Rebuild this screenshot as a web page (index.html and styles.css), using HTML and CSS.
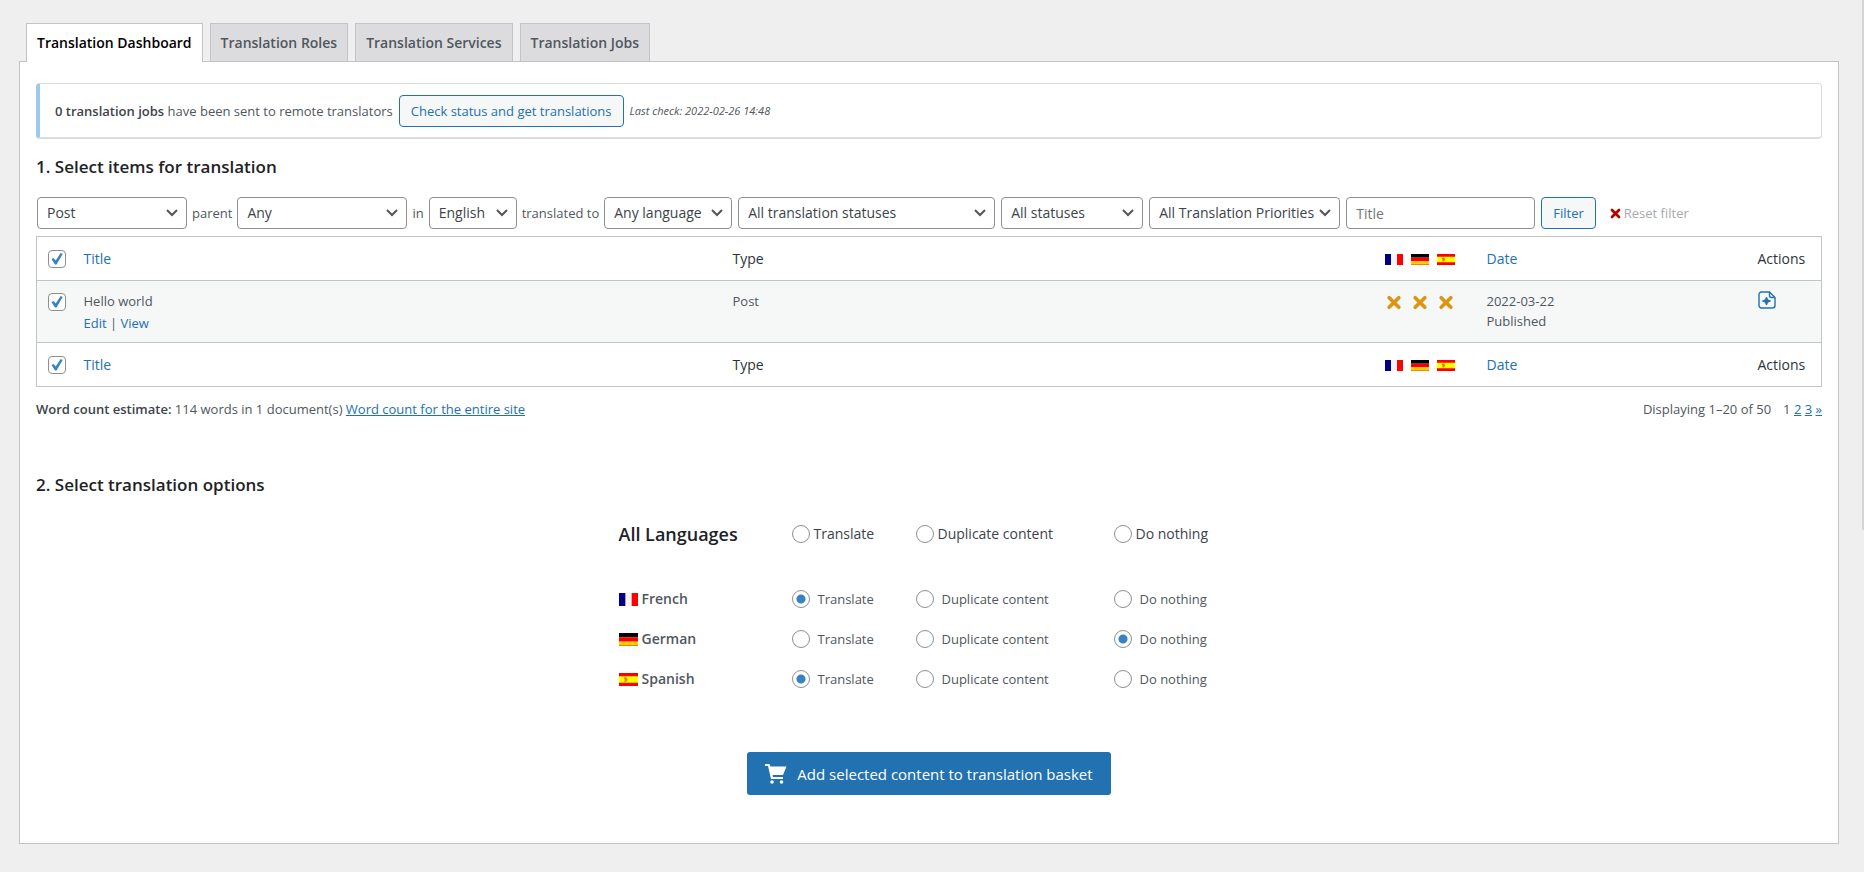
FILE: index.html
```html
<!DOCTYPE html>
<html lang="en">
<head>
  <meta charset="UTF-8">
  <title>Translation Management</title>
  <link rel="stylesheet" href="styles.css">
</head>
<body>

  <!-- shared icons -->
  <svg class="sprite" aria-hidden="true">
    <symbol id="flag-fr" viewBox="0 0 18 12" preserveAspectRatio="none">
      <rect width="18" height="12" fill="#f4f4f4"/>
      <rect width="6" height="12" fill="#000080"/>
      <rect x="12" width="6" height="12" fill="#f00"/>
    </symbol>
    <symbol id="flag-de" viewBox="0 0 18 12" preserveAspectRatio="none">
      <rect width="18" height="4" fill="#000"/>
      <rect y="4" width="18" height="4" fill="#f00"/>
      <rect y="8" width="18" height="4" fill="#fc0"/>
      <path d="M0 11.5h18" stroke="#e08a00"/>
    </symbol>
    <symbol id="flag-es" viewBox="0 0 18 12" preserveAspectRatio="none">
      <rect width="18" height="12" fill="#f00"/>
      <rect y="3" width="18" height="6" fill="#ff0"/>
      <path d="M5 4h2v1h1v2H7v1H5V7h1V6H5z" fill="#e07000"/>
    </symbol>
    <symbol id="icon-cross" viewBox="0 0 14 14">
      <path d="M2.5 2.5l9 9M11.5 2.5l-9 9" stroke="currentColor" stroke-width="3.4" stroke-linecap="round"/>
    </symbol>
  </svg>

  <nav class="tabs">
    <a href="#" class="tab active">Translation Dashboard</a>
    <a href="#" class="tab">Translation Roles</a>
    <a href="#" class="tab">Translation Services</a>
    <a href="#" class="tab">Translation Jobs</a>
  </nav>

  <main class="panel">
    <div class="notice">
      <span><strong>0 translation jobs</strong> have been sent to remote translators</span>
      <button type="button" class="btn">Check status and get translations</button>
      <em class="last-check">Last check: 2022-02-26 14:48</em>
    </div>

    <h2>1. Select items for translation</h2>

    <form class="filters">
      <select class="w-post" aria-label="Type"><option>Post</option></select>
      <label for="parent">parent</label>
      <select id="parent" class="w-parent"><option>Any</option></select>
      <label for="source">in</label>
      <select id="source" class="w-source"><option>English</option></select>
      <label for="target">translated to</label>
      <select id="target" class="w-target"><option>Any language</option></select>
      <select class="w-tstatus" aria-label="Translation status"><option>All translation statuses</option></select>
      <select class="w-status" aria-label="Status"><option>All statuses</option></select>
      <select class="w-priority" aria-label="Priority"><option>All Translation Priorities</option></select>
      <input type="text" class="w-title" placeholder="Title" aria-label="Title">
      <button type="button" class="btn">Filter</button>
      <a href="#" class="reset"><svg class="reset-icon"><use href="#icon-cross"/></svg>Reset filter</a>
    </form>

    <table class="items">
      <thead>
        <tr>
          <th class="col-check"><input type="checkbox" checked aria-label="Select all"></th>
          <th class="col-title"><a href="#">Title</a></th>
          <th class="col-type">Type</th>
          <th class="col-langs">
            <span class="icons">
              <svg class="flag" role="img" aria-label="French"><use href="#flag-fr"/></svg>
              <svg class="flag" role="img" aria-label="German"><use href="#flag-de"/></svg>
              <svg class="flag" role="img" aria-label="Spanish"><use href="#flag-es"/></svg>
            </span>
          </th>
          <th class="col-date"><a href="#">Date</a></th>
          <th class="col-actions">Actions</th>
        </tr>
      </thead>
      <tbody>
        <tr>
          <td class="col-check"><input type="checkbox" checked aria-label="Select Hello world"></td>
          <td>
            Hello world
            <div class="row-actions"><a href="#">Edit</a> | <a href="#">View</a></div>
          </td>
          <td>Post</td>
          <td>
            <span class="icons">
              <svg class="cross"><use href="#icon-cross"/></svg>
              <svg class="cross"><use href="#icon-cross"/></svg>
              <svg class="cross"><use href="#icon-cross"/></svg>
            </span>
          </td>
          <td>2022-03-22<br>Published</td>
          <td>
            <a href="#" class="add-note" aria-label="Add note">
              <svg viewBox="0 0 18 18" fill="none" stroke="currentColor" stroke-width="1.4">
                <path d="M11.5 1H3.500A2.500 2.500 0 0 0 1 3.500V14.500A2.500 2.500 0 0 0 3.500 17H14.500A2.500 2.500 0 0 0 17 14.500V6.500Z"/>
                <path d="M11.500 1V4.500A2 2 0 0 0 13.500 6.500H17"/>
                <path d="M8.500 6l1.200 2.800L12.500 10l-2.800 1.200L8.500 14l-1.200-2.800L4.500 10l2.800-1.200z" fill="currentColor" stroke-width="1"/>
              </svg>
            </a>
          </td>
        </tr>
      </tbody>
      <tfoot>
        <tr>
          <th class="col-check"><input type="checkbox" checked aria-label="Select all"></th>
          <th><a href="#">Title</a></th>
          <th>Type</th>
          <th>
            <span class="icons">
              <svg class="flag" role="img" aria-label="French"><use href="#flag-fr"/></svg>
              <svg class="flag" role="img" aria-label="German"><use href="#flag-de"/></svg>
              <svg class="flag" role="img" aria-label="Spanish"><use href="#flag-es"/></svg>
            </span>
          </th>
          <th><a href="#">Date</a></th>
          <th>Actions</th>
        </tr>
      </tfoot>
    </table>

    <div class="table-foot">
      <p><strong>Word count estimate:</strong> 114 words in 1 document(s) <a href="#">Word count for the entire site</a></p>
      <p class="paging"><span>Displaying 1–20 of 50</span> <span>1 <a href="#">2</a> <a href="#">3</a> <a href="#">»</a></span></p>
    </div>

    <h2>2. Select translation options</h2>

    <form class="options">
      <div class="lang-row all">
        <span class="lang">All Languages</span>
        <label><input type="radio" name="all">Translate</label>
        <label><input type="radio" name="all">Duplicate content</label>
        <label><input type="radio" name="all">Do nothing</label>
      </div>
      <div class="lang-row">
        <span class="lang"><svg class="flag"><use href="#flag-fr"/></svg>French</span>
        <label><input type="radio" name="fr" checked>Translate</label>
        <label><input type="radio" name="fr">Duplicate content</label>
        <label><input type="radio" name="fr">Do nothing</label>
      </div>
      <div class="lang-row">
        <span class="lang"><svg class="flag"><use href="#flag-de"/></svg>German</span>
        <label><input type="radio" name="de">Translate</label>
        <label><input type="radio" name="de">Duplicate content</label>
        <label><input type="radio" name="de" checked>Do nothing</label>
      </div>
      <div class="lang-row">
        <span class="lang"><svg class="flag"><use href="#flag-es"/></svg>Spanish</span>
        <label><input type="radio" name="es" checked>Translate</label>
        <label><input type="radio" name="es">Duplicate content</label>
        <label><input type="radio" name="es">Do nothing</label>
      </div>

      <button type="button" class="btn-primary">
        <svg viewBox="0 0 22 20" fill="#fff">
          <path d="M0 0h4.500l1 2.500H21.500L18 11H7.500L8 13H18v2H6L3 2H0z"/>
          <circle cx="7" cy="18" r="1.800"/>
          <circle cx="16.500" cy="18" r="1.800"/>
        </svg>
        Add selected content to translation basket
      </button>
    </form>
  </main>

</body>
</html>
```
FILE: styles.css
```css
* {
  box-sizing: border-box;
}

body {
  margin: 0;
  min-height: 100vh;
  padding: 23px 25px 29px 19px;
  background: #efefef linear-gradient(#d5d5d5, #d5d5d5) no-repeat right top / 2px 530px;
  font-family: 'Open Sans', 'Noto Sans', sans-serif;
  font-size: 13px;
  line-height: 20px;
  color: #50575e;
}

a {
  color: #2271b1;
  text-decoration: none;
}

strong {
  font-weight: 600;
  color: #3c434a;
}

.sprite {
  position: absolute;
  width: 0;
  height: 0;
}

/* tabs */
.tabs {
  display: flex;
  gap: 7px;
  padding-left: 7px;
}

.tab {
  padding: 9px 10px 8px;
  background: #dcdcde;
  border: 1px solid #c3c4c7;
  border-bottom: none;
  font-size: 14px;
  font-weight: 600;
  color: #50575e;
}

.tab.active {
  margin-bottom: -1px;
  padding-bottom: 9px;
  background: #fff;
  color: #000;
  z-index: 1;
}

.panel {
  padding: 21px 16px 48px;
  background: #fff;
  border: 1px solid #c3c4c7;
}

.notice {
  display: flex;
  align-items: center;
  gap: 6px;
  padding: 11px 15px 10px;
  border: 1px solid #dcdcde;
  border-left: 4px solid #9ec9ee;
  border-bottom-width: 2px;
  border-radius: 4px;
}

.last-check {
  font-size: 11px;
}

h2 {
  margin: 16px 0 18px;
  font-size: 17px;
  font-weight: 600;
  line-height: 24px;
  color: #1d2327;
}

.btn,
select,
input[type="text"] {
  height: 32px;
  border: 1px solid #8c8f94;
  border-radius: 4px;
  background-color: #fff;
  font: inherit;
  font-size: 14px;
  color: #3c434a;
}

.btn {
  padding: 0 11px;
  border-color: #2271b1;
  background: #f6f7f7;
  font-size: 13px;
  color: #2271b1;
}

/* filter bar */
.filters {
  display: flex;
  align-items: center;
  gap: 6px;
  padding-left: 1px;
}

.filters label {
  margin: 0 -1px;
}

select {
  appearance: none;
  padding: 0 24px 0 9px;
  background: #fff url('data:image/svg+xml;utf8,<svg xmlns="http://www.w3.org/2000/svg" width="14" height="10" viewBox="0 0 14 10"><path d="M2 2l5 5 5-5" fill="none" stroke="%23555" stroke-width="2"/></svg>') no-repeat right 7px center;
}

.w-post { width: 150px; }
.w-parent { width: 170px; }
.w-source { width: 88px; }
.w-target { width: 128px; }
.w-tstatus { width: 257px; }
.w-status { width: 142px; }
.w-priority { width: 191px; }
.w-title { width: 189px; }

input[type="text"] {
  padding: 0 9px;
}

::placeholder {
  color: #757575;
}

.reset {
  display: flex;
  align-items: center;
  gap: 3px;
  padding-left: 8px;
  color: #a7aaad;
}

.reset-icon {
  width: 11px;
  height: 11px;
  color: #b00000;
}

/* items table */
.items {
  width: 100%;
  margin-top: 7px;
  border-collapse: collapse;
  border: 1px solid #c3c4c7;
  table-layout: fixed;
}

.items th {
  padding: 12px 10px 11px;
  font-size: 14px;
  font-weight: 400;
  text-align: left;
  color: #2c3338;
}

.items td {
  padding: 10px 10px 9px;
  border-top: 1px solid #c3c4c7;
  border-bottom: 1px solid #c3c4c7;
  background: #f6f7f7;
  vertical-align: top;
}

.items .col-check {
  width: 37px;
  padding-left: 11px;
  padding-right: 0;
}

.items td.col-check {
  padding-top: 12px;
}

.col-type { width: 652px; }
.col-langs { width: 102px; }
.col-date { width: 271px; }
.col-actions { width: 74px; }

.row-actions {
  margin-top: 2px;
}

.icons {
  display: flex;
  gap: 8px;
}

.flag {
  width: 18px;
  height: 11px;
}

.cross {
  width: 18px;
  height: 15px;
  margin-top: 4px;
  color: #dd940f;
}

.add-note svg {
  width: 18px;
  height: 18px;
  display: block;
}

input[type="checkbox"],
input[type="radio"] {
  appearance: none;
  width: 18px;
  height: 18px;
  margin: 0;
  display: block;
  border: 1px solid #8c8f94;
  border-radius: 4px;
  background: #fff no-repeat center;
}

input[type="checkbox"]:checked {
  background-image: url('data:image/svg+xml;utf8,<svg xmlns="http://www.w3.org/2000/svg" width="16" height="16" viewBox="0 0 16 16"><path d="M2.500 8l2.200-1 2 2.500 5-7.500 2 1L7.500 13.500H6z" fill="%233582c4"/></svg>');
}

input[type="radio"] {
  border-radius: 50%;
}

input[type="radio"]:checked {
  background-image: radial-gradient(circle, #3582c4 4px, transparent 5px);
}

.table-foot {
  display: flex;
  justify-content: space-between;
  margin-top: 12px;
}

.table-foot p {
  margin: 0;
}

.table-foot a {
  text-decoration: underline;
}

.paging {
  display: flex;
  gap: 12px;
}

.table-foot + h2 {
  margin: 54px 0 17px;
}

/* translation options */
.options {
  display: flex;
  flex-direction: column;
  align-items: center;
}

.lang-row {
  display: grid;
  grid-template-columns: 173px 124px 198px 126px;
  align-items: center;
  height: 40px;
}

.lang-row.all {
  margin-bottom: 25px;
  font-size: 14px;
  color: #3c434a;
}

.lang-row label {
  display: flex;
  align-items: center;
  gap: 8px;
}

.lang-row.all label {
  gap: 4px;
}

.lang {
  display: flex;
  align-items: center;
  gap: 4px;
  font-size: 14px;
  font-weight: 600;
}

.lang .flag {
  width: 19px;
  height: 13px;
}

.all .lang {
  font-size: 18px;
  color: #1d2327;
}

.btn-primary {
  display: flex;
  align-items: center;
  gap: 10px;
  height: 43px;
  margin-top: 53px;
  padding: 0 18px;
  border: none;
  border-radius: 3px;
  background: #2271b1;
  color: #fff;
  font: inherit;
  font-size: 15px;
}

.btn-primary svg {
  width: 22px;
  height: 20px;
}
```
